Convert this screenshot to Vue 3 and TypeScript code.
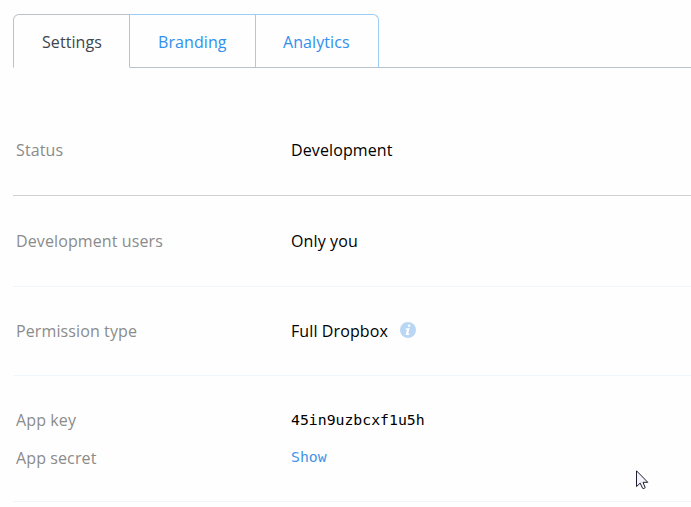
<script setup lang="ts">
import { ref } from 'vue'

interface Field {
  label: string
  value: string
  kind?: 'info' | 'code' | 'link'
}

interface Section {
  id: string
  fields: Field[]
}

const tabs: string[] = ['Settings', 'Branding', 'Analytics']
const active = ref('Settings')

const sections: Section[] = [
  { id: 'status', fields: [{ label: 'Status', value: 'Development' }] },
  { id: 'users', fields: [{ label: 'Development users', value: 'Only you' }] },
  { id: 'permission', fields: [{ label: 'Permission type', value: 'Full Dropbox', kind: 'info' }] },
  {
    id: 'keys',
    fields: [
      { label: 'App key', value: '45in9uzbcxf1u5h', kind: 'code' },
      { label: 'App secret', value: 'Show', kind: 'link' },
    ],
  },
]
</script>

<template>
  <main class="page">
    <nav class="tabs">
      <button
        v-for="tab in tabs"
        :key="tab"
        class="tab"
        :class="[tab.toLowerCase(), { active: tab === active }]"
        @click="active = tab"
      >
        {{ tab }}
      </button>
      <span class="rest"></span>
    </nav>
    <section v-for="s in sections" :key="s.id" class="section" :class="s.id">
      <div v-for="f in s.fields" :key="f.label" class="field">
        <span class="label">{{ f.label }}</span>
        <a v-if="f.kind === 'link'" class="mono link">{{ f.value }}</a>
        <span v-else :class="{ mono: f.kind === 'code' }">{{ f.value }}</span>
        <svg v-if="f.kind === 'info'" class="info" viewBox="0 0 16 16">
          <circle cx="8" cy="8" r="8" fill="#b9d7f4" />
          <circle cx="9.1" cy="3.8" r="1.3" fill="#fff" />
          <path d="M5.9 6.3h3.8L8.2 11.6h1.3L9 12.9H5.6L7 7.6H5.5z" fill="#fff" />
        </svg>
      </div>
    </section>
    <svg class="cursor" viewBox="0 0 13 20">
      <path
        d="M.5 .8V16.6L4.2 13.1L6.5 18.2Q7.8 19.3 9.2 17.6L7 12.3H11.8Z"
        fill="#f4f4f8"
        stroke="#1c1d33"
        stroke-width="1"
      />
    </svg>
  </main>
</template>

<style>
body {
  margin: 0;
  background: #fefefe;
}
</style>

<style scoped>
.page {
  position: relative;
  box-sizing: border-box;
  height: 507px;
  padding: 14px 0 0 13px;
  overflow: hidden;
  font: 16px/24px 'Open Sans', sans-serif;
  letter-spacing: 0.11px;
  color: #000;
}
.tabs {
  display: flex;
  height: 54px;
}
.tab {
  box-sizing: border-box;
  width: 126px;
  padding: 2px 0 0 28px;
  border: 1px solid #9ccdf6;
  border-width: 1px 1px 1px 0;
  border-bottom-color: #b9c1c9;
  background: transparent;
  color: #2f90ee;
  font: inherit;
  letter-spacing: 0.08px;
  text-align: left;
}
.tab.settings {
  width: 117px;
  border-left-width: 1px;
  border-top-left-radius: 6px;
}
.tab.analytics {
  width: 123px;
  padding-left: 27px;
  border-top-right-radius: 6px;
}
.tab.active {
  border-color: #b9c1c9;
  border-bottom-color: transparent;
  color: #3d464d;
}
.rest {
  flex: 1;
  border-bottom: 1px solid #b9c1c9;
}
.section {
  box-sizing: border-box;
  display: flex;
  flex-direction: column;
  gap: 14px;
  height: 90px;
  padding: 33px 0 0 3px;
  border-bottom: 1px solid #edf6fd;
}
.status {
  height: 128px;
  padding-top: 70px;
  border-bottom-color: #cfd1d4;
}
.users {
  height: 91px;
}
.permission {
  height: 89px;
  padding-top: 32px;
}
.keys {
  height: 126px;
  padding-top: 32px;
}
.field {
  display: flex;
  height: 24px;
}
.label {
  width: 275px;
  color: #8b8b8b;
}
.mono {
  font-family: 'DejaVu Sans Mono', monospace;
  font-size: 14.8px;
  letter-spacing: 0;
}
.link {
  line-height: 22px;
  color: #3f94ea;
}
.info {
  width: 16px;
  height: 16px;
  margin: 3px 0 0 12px;
}
.cursor {
  position: absolute;
  left: 636px;
  top: 470px;
  width: 13px;
  height: 20px;
}
</style>
